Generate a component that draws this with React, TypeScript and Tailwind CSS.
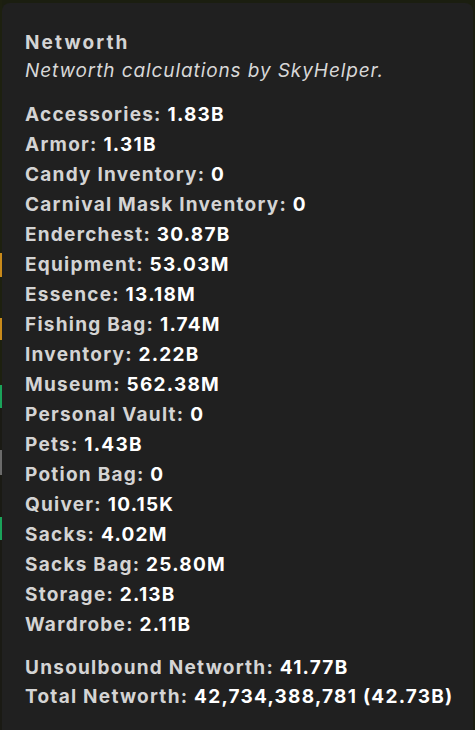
import React from "react";

const rows: [string, string][] = [
  ["Accessories", "1.83B"],
  ["Armor", "1.31B"],
  ["Candy Inventory", "0"],
  ["Carnival Mask Inventory", "0"],
  ["Enderchest", "30.87B"],
  ["Equipment", "53.03M"],
  ["Essence", "13.18M"],
  ["Fishing Bag", "1.74M"],
  ["Inventory", "2.22B"],
  ["Museum", "562.38M"],
  ["Personal Vault", "0"],
  ["Pets", "1.43B"],
  ["Potion Bag", "0"],
  ["Quiver", "10.15K"],
  ["Sacks", "4.02M"],
  ["Sacks Bag", "25.80M"],
  ["Storage", "2.13B"],
  ["Wardrobe", "2.11B"],
];

function Row({ label, value }: { label: string; value: string }) {
  return (
    <div className="h-[30px] leading-[30px] whitespace-nowrap">
      <span className="text-[#d4d4d4]">{label}: </span>
      <span className="text-white">{value}</span>
    </div>
  );
}

export default function App() {
  return (
    <div className="h-[730px] w-[475px] overflow-hidden bg-[#1b1e10] flex font-['Inter',sans-serif]">
      <div className="w-[2px] flex flex-col shrink-0">
        <div className="h-[253px] bg-[#1d200f]" />
        <div className="h-[24px] bg-[#c98a1a]" />
        <div className="h-[41px] bg-[#1d200f]" />
        <div className="h-[22px] bg-[#c98a1a]" />
        <div className="h-[45px] bg-[#1d200f]" />
        <div className="h-[23px] bg-[#1aa35a]" />
        <div className="h-[42px] bg-[#1a1a14]" />
        <div className="h-[25px] bg-[#6b6b6b]" />
        <div className="h-[42px] bg-[#1a1a14]" />
        <div className="h-[23px] bg-[#1aa35a]" />
        <div className="flex-1 bg-[#1a1a14]" />
      </div>
      <div className="mt-[3px] w-[471px] h-[760px] rounded-[8px] bg-[#202020] pl-[23px] pt-[26px] text-[19px] font-bold tracking-[1.25px]">
        <div className="h-[28px] leading-[28px] text-[#d4d4d4] tracking-[2.1px]">Networth</div>
        <div className="h-[28px] leading-[28px] text-[#d8d8d8] italic font-normal tracking-[0.9px]">
          Networth calculations by SkyHelper.
        </div>
        <div className="mt-[15px]">
          {rows.map(([l, v]) => (
            <Row key={l} label={l} value={v} />
          ))}
        </div>
        <div className="mt-[13px]">
          <div className="h-[29px] leading-[29px] whitespace-nowrap">
            <span className="text-[#d4d4d4]">Unsoulbound Networth: </span>
            <span className="text-white">41.77B</span>
          </div>
          <div className="h-[29px] leading-[29px] whitespace-nowrap">
            <span className="text-[#d4d4d4]">Total Networth: </span>
            <span className="text-white">42,734,388,781 (42.73B)</span>
          </div>
        </div>
      </div>
    </div>
  );
}
